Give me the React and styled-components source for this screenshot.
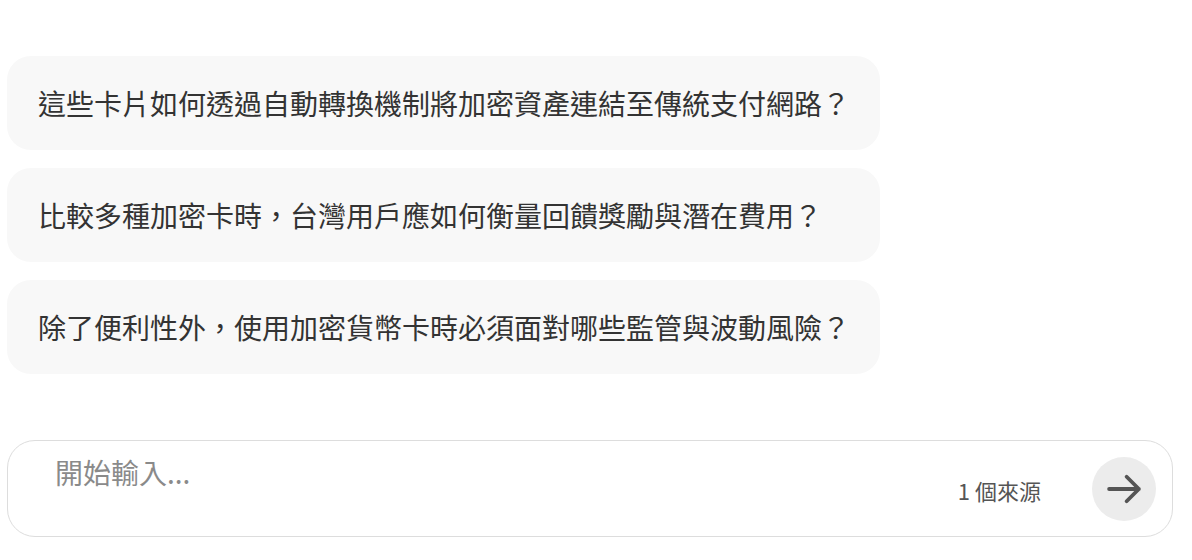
import React, { useState } from "react";
import styled, { createGlobalStyle } from "styled-components";

const suggestions = [
  "這些卡片如何透過自動轉換機制將加密資產連結至傳統支付網路？",
  "比較多種加密卡時，台灣用戶應如何衡量回饋獎勵與潛在費用？",
  "除了便利性外，使用加密貨幣卡時必須面對哪些監管與波動風險？",
];

const GlobalStyle = createGlobalStyle`
  html, body {
    margin: 0;
    padding: 0;
    background: #ffffff;
    font-family: "Noto Sans CJK TC", "Noto Sans", sans-serif;
  }
  * {
    box-sizing: border-box;
  }
`;

const Page = styled.div`
  width: 1192px;
  height: 560px;
  padding: 56px 19px 0 7px;
  display: flex;
  flex-direction: column;
`;

const SuggestionList = styled.div`
  display: flex;
  flex-direction: column;
  gap: 18px;
`;

const SuggestionCard = styled.button`
  width: 873px;
  height: 94px;
  border: none;
  border-radius: 24px;
  background: #f8f8f8;
  padding: 0 0 0 31px;
  display: flex;
  align-items: center;
  text-align: left;
  font-family: inherit;
  font-size: 28px;
  color: #333333;
  cursor: pointer;
`;

const Composer = styled.div`
  margin-top: 66px;
  height: 97px;
  border: 1.5px solid #dddddd;
  border-radius: 28px;
  display: flex;
  align-items: flex-start;
  padding: 0 16px 0 45px;
`;

const Input = styled.input`
  flex: 1;
  border: none;
  outline: none;
  background: transparent;
  margin-top: 11px;
  height: 40px;
  font-family: inherit;
  font-size: 28px;
  color: #333;
  &::placeholder {
    color: #8a8a8a;
  }
`;

const SourceCount = styled.span`
  align-self: center;
  font-size: 22px;
  color: #555555;
  margin-right: 51px;
  margin-top: 2px;
`;

const SendButton = styled.button`
  align-self: center;
  width: 64px;
  height: 64px;
  border: none;
  border-radius: 50%;
  background: #ececec;
  display: grid;
  place-items: center;
  padding: 0;
  cursor: pointer;
`;

const App = () => {
  const [text, setText] = useState("");

  return (
    <Page>
      <GlobalStyle />
      <SuggestionList>
        {suggestions.map((s) => (
          <SuggestionCard key={s}>{s}</SuggestionCard>
        ))}
      </SuggestionList>
      <Composer>
        <Input
          value={text}
          onChange={(e) => setText(e.target.value)}
          placeholder="開始輸入..."
        />
        <SourceCount>1 個來源</SourceCount>
        <SendButton aria-label="送出">
          <svg width="42" height="42" viewBox="0 0 24 24" fill="none">
            <path
              d="M3.5 12h17M13.5 5l7 7-7 7"
              stroke="#555555"
              strokeWidth="2.2"
              strokeLinecap="round"
              strokeLinejoin="round"
            />
          </svg>
        </SendButton>
      </Composer>
    </Page>
  );
};

export default App;
